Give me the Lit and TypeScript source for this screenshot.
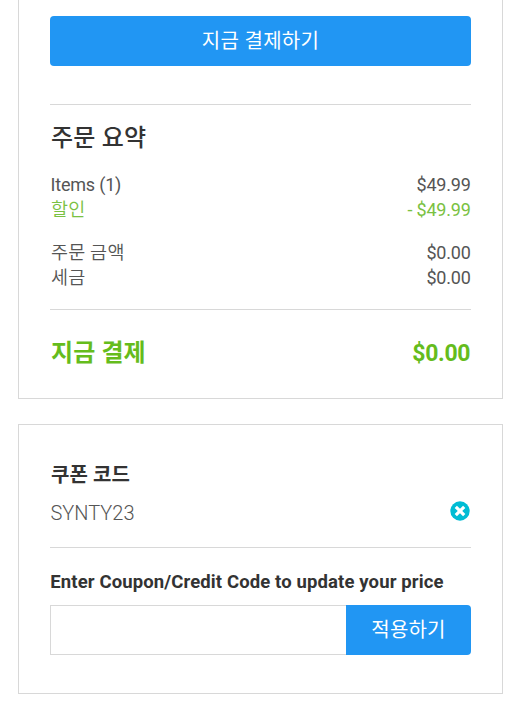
import { LitElement, html, css } from "lit";
import { customElement } from "lit/decorators.js";

@customElement("app-root")
export class AppRoot extends LitElement {
  static styles = css`
    :host { display: block; height: 711px; overflow: hidden; background: #fff; color: #555; font-family: Roboto, "Noto Sans CJK KR", sans-serif; font-size: 18px; }
    * { box-sizing: border-box; }
    .card { width: 485px; margin-left: 18px; border: 1px solid #d8d8d8; padding: 0 31px; }
    .order { height: 399px; border-top: 0; padding-top: 16px; }
    .coupon { height: 270px; margin-top: 25px; padding-top: 37px; }
    button { border: 0; padding: 0; margin: 0; background: #2196f3; color: #fff; font: inherit; }
    .pay { display: block; width: 421px; height: 50px; border-radius: 4px; font-size: 20px; line-height: 48px; letter-spacing: 0.3px; }
    .rule { height: 1px; background: #d8d8d8; }
    h2, h3 { margin: 0; color: #333; }
    h2 { font-size: 24px; font-weight: 500; line-height: 32px; margin-top: 17px; padding-left: 1px; letter-spacing: 0.2px; }
    .row { display: flex; justify-content: space-between; align-items: center; height: 25px; line-height: 25px; }
    .row .label { padding-left: 1px; padding-bottom: 3px; font-family: "Noto Sans CJK KR DemiLight", "Noto Sans CJK KR", sans-serif; font-size: 18.5px; font-weight: 350; letter-spacing: 0.3px; }
    .row .latin { padding-left: 0.5px; padding-bottom: 0; font-family: Roboto, sans-serif; }
    .row .value, .row .latin { letter-spacing: -0.2px; font-size: 18px; font-weight: 400; }
    .green { color: #7ac142; }
    .row .value { margin-right: 0.4px; }
    .total { height: 36px; color: #65bc1c; }
    .total .label { font-family: inherit; padding-bottom: 0; font-size: 24px; font-weight: 700; letter-spacing: 0.1px; }
    .total .value { font-size: 23px; font-weight: 700; letter-spacing: -0.3px; margin-right: 0.8px; }
    h3 { font-size: 20px; line-height: 26px; font-weight: 700; letter-spacing: 0.1px; padding-left: 1px; }
    .code { font-size: 20px; font-weight: 300; height: 30px; }
    .code span { padding-left: 0.5px; padding-top: 1px; }
    .form { display: flex; height: 50px; }
    input { width: 296px; border: 1px solid #d8d8d8; border-right: 0; padding: 0 12px; margin: 0; font: inherit; outline: 0; border-radius: 0; }
    .apply { width: 125px; border-radius: 0 4px 4px 0; font-size: 20px; line-height: 48px; letter-spacing: 0.2px; }
    svg { width: 20px; height: 20px; margin-right: 1.5px; margin-bottom: 4px; }
    .rule1 { margin-top: 38px; }
    .items { margin-top: 18px; }
    .amounts { margin-top: 18px; }
    .rule2 { margin-top: 19px; }
    .total { margin-top: 25px; }
    .code { margin-top: 10px; }
    .rule3 { margin-top: 19px; }
    .prompt { margin-top: 21px; font-size: 18.5px; padding-left: 0.3px; letter-spacing: 0.12px; white-space: nowrap; }
    .form { margin-top: 10px; }
  `;
  render() {
    return html`
      <section class="card order">
        <button class="pay">지금 결제하기</button>
        <div class="rule rule1"></div>
        <h2>주문 요약</h2>
        <div class="items">
          <div class="row"><span class="label latin">Items (1)</span><span class="value">$49.99</span></div>
          <div class="row green"><span class="label">할인</span><span class="value">- $49.99</span></div>
        </div>
        <div class="amounts">
          <div class="row"><span class="label">주문 금액</span><span class="value">$0.00</span></div>
          <div class="row"><span class="label">세금</span><span class="value">$0.00</span></div>
        </div>
        <div class="rule rule2"></div>
        <div class="row total"><span class="label">지금 결제</span><span class="value">$0.00</span></div>
      </section>
      <section class="card coupon">
        <h3>쿠폰 코드</h3>
        <div class="row code"><span>SYNTY23</span>
          <svg viewBox="0 0 20 20"><circle cx="10" cy="10" r="9.7" fill="#00bcd4"/><path d="M5.8 5.8l8.4 8.4M14.2 5.8l-8.4 8.4" stroke="#fff" stroke-width="3.2"/></svg>
        </div>
        <div class="rule rule3"></div>
        <h3 class="prompt">Enter Coupon/Credit Code to update your price</h3>
        <div class="form"><input aria-label="Coupon" /><button class="apply">적용하기</button></div>
      </section>
    `;
  }
}
